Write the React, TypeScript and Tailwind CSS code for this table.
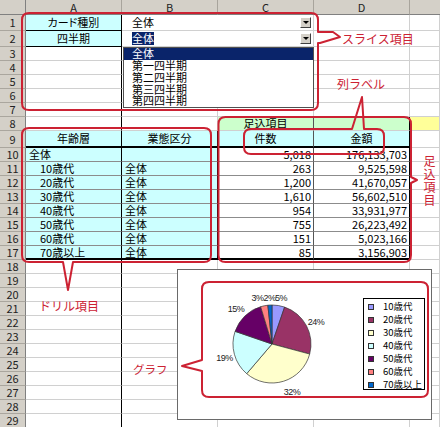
import type { ReactNode } from "react";

type CellProps = {
  w: string;
  r?: string;
  b?: string;
  className?: string;
  children?: ReactNode;
};

// one spreadsheet cell, grid line on right and bottom unless overridden
function Cell({
  w,
  r = "border-r border-r-[#d0d0d0]",
  b = "border-b border-b-[#d0d0d0]",
  className = "",
  children,
}: CellProps) {
  return (
    <div className={`${w} ${r} ${b} ${className} h-full shrink-0 flex items-center whitespace-nowrap`}>
      {children}
    </div>
  );
}

function RowHead({ n }: { n: number }) {
  return (
    <div className="w-[26px] h-full shrink-0 flex items-center justify-center bg-[#d4d0c8] border-r border-r-[#808080] border-b border-b-[#aaa69e] text-[11px] text-[#222]">
      {n}
    </div>
  );
}

const COL_A = "border-r border-r-black";

function PlainRow({ n }: { n: number }) {
  return (
    <div className="flex h-[14px]">
      <RowHead n={n} />
      <Cell w="w-[96px]" r={COL_A} />
      <Cell w="w-[96px]" />
      <Cell w="w-[96px]" />
      <Cell w="w-[96px]" />
      <Cell w="w-[30px]" />
    </div>
  );
}

function ArrowButton() {
  return (
    <div className="w-[11px] h-[11px] flex items-center justify-center bg-[#d4d0c8] border border-t-white border-l-white border-b-[#404040] border-r-[#404040]">
      <div className="w-0 h-0 border-l-[3px] border-r-[3px] border-t-[3px] border-l-transparent border-r-transparent border-t-black" />
    </div>
  );
}

const tableRows = [
  { n: 10, a: "全体", b: "", c: "5,018", d: "176,133,703" },
  { n: 11, a: "10歳代", b: "全体", c: "263", d: "9,525,598" },
  { n: 12, a: "20歳代", b: "全体", c: "1,200", d: "41,670,057" },
  { n: 13, a: "30歳代", b: "全体", c: "1,610", d: "56,602,510" },
  { n: 14, a: "40歳代", b: "全体", c: "954", d: "33,931,977" },
  { n: 15, a: "50歳代", b: "全体", c: "755", d: "26,223,492" },
  { n: 16, a: "60歳代", b: "全体", c: "151", d: "5,023,166" },
  { n: 17, a: "70歳以上", b: "全体", c: "85", d: "3,156,903" },
];

const slices = [
  { label: "10歳代", v: 263, color: "#9999ff" },
  { label: "20歳代", v: 1200, color: "#993366" },
  { label: "30歳代", v: 1610, color: "#ffffcc" },
  { label: "40歳代", v: 954, color: "#ccffff" },
  { label: "50歳代", v: 755, color: "#660066" },
  { label: "60歳代", v: 151, color: "#ff8080" },
  { label: "70歳以上", v: 85, color: "#0066cc" },
];

function pieSlices(cx: number, cy: number, r: number) {
  const total = slices.reduce((s, x) => s + x.v, 0);
  let acc = 0;
  return slices.map((s) => {
    const a0 = (acc / total) * Math.PI * 2;
    acc += s.v;
    const a1 = (acc / total) * Math.PI * 2;
    const x0 = cx + r * Math.sin(a0);
    const y0 = cy - r * Math.cos(a0);
    const x1 = cx + r * Math.sin(a1);
    const y1 = cy - r * Math.cos(a1);
    const large = a1 - a0 > Math.PI ? 1 : 0;
    return {
      ...s,
      d: `M${cx},${cy} L${x0},${y0} A${r},${r} 0 ${large} 1 ${x1},${y1} Z`,
    };
  });
}

const pctLabels = [
  { t: "5%", x: 103, y: 31 },
  { t: "3%2%", x: 85.5, y: 31 },
  { t: "24%", x: 138, y: 55 },
  { t: "15%", x: 58, y: 42 },
  { t: "19%", x: 46.5, y: 91 },
  { t: "32%", x: 114, y: 125 },
];

export default function App() {
  return (
    <div className="relative w-[440px] h-[427px] overflow-hidden bg-white text-black leading-none font-['Noto_Sans_CJK_JP','Noto_Sans',sans-serif]">
      {/* Sheet */}
      <div className="flex flex-col text-[11px] [font-feature-settings:'palt']">
        {/* Column headers */}
        <div className="flex h-[15px]">
          <div className="w-[26px] h-full shrink-0 bg-[#d4d0c8] border-r border-r-[#808080] border-b border-b-[#808080]" />
          {["A", "B", "C", "D"].map((c) => (
            <div
              key={c}
              className="w-[96px] h-full shrink-0 flex items-center justify-center bg-[#d4d0c8] border-r border-r-[#a8a49c] border-b border-b-[#808080] text-[11px] text-[#222]"
            >
              {c}
            </div>
          ))}
          <div className="w-[30px] h-full shrink-0 bg-[#d4d0c8] border-b border-b-[#808080]" />
        </div>

        {/* Row 1 */}
        <div className="flex h-[16px]">
          <RowHead n={1} />
          <Cell w="w-[96px]" r={COL_A} b="border-b border-b-black" className="justify-center bg-[#ccffff]">
            カード種別
          </Cell>
          <Cell w="w-[192px]" className="justify-between pl-[10px] pr-[2px] bg-white">
            <span>全体</span>
            <ArrowButton />
          </Cell>
          <Cell w="w-[96px]" />
          <Cell w="w-[30px]" />
        </div>

        {/* Row 2 */}
        <div className="flex h-[16px]">
          <RowHead n={2} />
          <Cell w="w-[96px]" r={COL_A} b="border-b border-b-black" className="justify-center bg-[#ccffff]">
            四半期
          </Cell>
          <Cell w="w-[192px]" className="justify-between pl-[10px] pr-[2px] bg-white">
            <span className="bg-[#0a246a] text-white py-[1px]">全体</span>
            <ArrowButton />
          </Cell>
          <Cell w="w-[96px]" />
          <Cell w="w-[30px]" />
        </div>

        {[3, 4, 5, 6, 7].map((n) => (
          <PlainRow key={n} n={n} />
        ))}

        {/* Row 8 */}
        <div className="flex h-[14px]">
          <RowHead n={8} />
          <Cell w="w-[96px]" r={COL_A} />
          <Cell w="w-[96px]" />
          <Cell w="w-[96px]" r="border-r border-r-[#555]" className="justify-center bg-[#ccffcc]">
            足込項目
          </Cell>
          <Cell w="w-[96px]" r="border-r border-r-black" className="bg-[#ccffcc]" />
          <Cell w="w-[30px]" className="bg-[#ffff99]" />
        </div>

        {/* Row 9 : headings */}
        <div className="flex h-[17px]">
          <RowHead n={9} />
          <Cell w="w-[96px]" r={COL_A} b="border-b-2 border-b-black" className="justify-center bg-[#ccffff]">
            年齢層
          </Cell>
          <Cell w="w-[96px]" r="border-r border-r-black" b="border-b-2 border-b-black" className="justify-center bg-[#ccffff]">
            業態区分
          </Cell>
          <Cell w="w-[96px]" r="border-r border-r-[#555]" b="border-b-2 border-b-black" className="justify-center bg-[#ccffff]">
            件数
          </Cell>
          <Cell w="w-[96px]" r="border-r border-r-black" b="border-b-2 border-b-black" className="justify-center bg-[#ccffff]">
            金額
          </Cell>
          <Cell w="w-[30px]" />
        </div>

        {/* Rows 10-17 : data */}
        {tableRows.map((row) => {
          const b = row.n === 17 ? "border-b-2 border-b-black" : "border-b border-b-[#8c8c8c]";
          return (
            <div key={row.n} className="flex h-[14px]">
              <RowHead n={row.n} />
              <Cell
                w="w-[96px]"
                r={COL_A}
                b={b}
                className={row.n === 10 ? "pl-[3px] bg-[#ccffff]" : "pl-[14px] bg-[#ccffff]"}
              >
                {row.a}
              </Cell>
              <Cell w="w-[96px]" r="border-r border-r-black" b={b} className="pl-[3px] bg-[#ccffff]">
                {row.b}
              </Cell>
              <Cell w="w-[96px]" r="border-r border-r-[#555]" b={b} className="justify-end pr-[2px]">
                {row.c}
              </Cell>
              <Cell w="w-[96px]" r="border-r border-r-black" b={b} className="justify-end pr-[2px]">
                {row.d}
              </Cell>
              <Cell w="w-[30px]" />
            </div>
          );
        })}

        {[18, 19, 20, 21, 22, 23, 24, 25, 26, 27, 28, 29].map((n) => (
          <PlainRow key={n} n={n} />
        ))}
      </div>

      {/* Open dropdown list of the quarter selector */}
      <div className="absolute left-[123px] top-[47px] w-[191px] h-[61px] bg-white border border-[#505050] text-[11px] leading-[11.5px] [font-feature-settings:'palt']">
        <div className="h-[12px] pl-[8px] bg-[#0a246a] text-white">全体</div>
        {["第一四半期", "第二四半期", "第三四半期", "第四四半期"].map((q) => (
          <div key={q} className="h-[11.75px] pl-[8px]">
            {q}
          </div>
        ))}
      </div>

      {/* Embedded chart */}
      <div className="absolute left-[177px] top-[269px] w-[255px] h-[151px] bg-white border border-[#6a6a6a]">
        <svg width="253" height="149" className="absolute left-0 top-0">
          {pieSlices(94, 74, 39).map((s) => (
            <path key={s.label} d={s.d} fill={s.color} stroke="#333" strokeWidth="0.7" />
          ))}
          {pctLabels.map((l) => (
            <text
              key={l.t}
              x={l.x}
              y={l.y}
              textAnchor="middle"
              fontSize="9"
              letterSpacing="-0.5"
              fill="#222"
              fontFamily="Liberation Sans, sans-serif"
            >
              {l.t}
            </text>
          ))}
        </svg>
        <div className="absolute left-[185px] top-[28px] w-[62px] h-[92px] border border-black bg-white pt-[1px] text-[9.5px] [font-feature-settings:'palt']">
          {slices.map((s) => (
            <div key={s.label} className="h-[13px] flex items-center">
              <div className="ml-[4px] w-[6px] h-[6px] border border-[#333]" style={{ backgroundColor: s.color }} />
              <span className="ml-[9px] whitespace-nowrap">{s.label}</span>
            </div>
          ))}
        </div>
      </div>

      {/* Annotation callouts */}
      <svg width="440" height="427" className="absolute left-0 top-0 pointer-events-none" fill="none" stroke="#cc2233" strokeWidth="2" strokeLinejoin="round">
        <path d="M29,13 H311 Q318,13 318,20 V32 L333,32 L340,37 L320,43 L318,43 V103 Q318,110 311,110 H29 Q22,110 22,103 V20 Q22,13 29,13 Z" />
        <path d="M251,129 H352 L362,97 L364,129 H377 Q384,129 384,136 V147 Q384,154 377,154 H251 Q244,154 244,147 V136 Q244,129 251,129 Z" />
        <path d="M29,128 H204 Q211,128 211,135 V255 Q211,262 204,262 H73 L68,290 L63,262 H29 Q22,262 22,255 V135 Q22,128 29,128 Z" />
        <path d="M225.5,117 H404 Q411,117 411,124 V177 L417,180 L411,183 V255 Q411,262 404,262 H225.5 Q218.5,262 218.5,255 V124 Q218.5,117 225.5,117 Z" />
        <path d="M209,282 H421 Q428,282 428,289 V390 Q428,397 421,397 H209 Q202,397 202,390 V371 L182,366 L202,360 V289 Q202,282 209,282 Z" />
      </svg>

      <span className="absolute left-[342px] top-[33px] text-[12px] leading-[12px] text-[#cc2233] whitespace-nowrap">スライス項目</span>
      <span className="absolute left-[337px] top-[78px] text-[12px] leading-[12px] text-[#cc2233] whitespace-nowrap">列ラベル</span>
      <span className="absolute left-[39px] top-[300px] text-[12px] leading-[12px] text-[#cc2233] whitespace-nowrap">ドリル項目</span>
      <span className="absolute left-[133px] top-[363px] text-[11.5px] leading-[12px] text-[#cc2233] whitespace-nowrap">グラフ</span>
      <span className="absolute left-[423px] top-[155px] text-[12px] leading-[12px] tracking-[1px] text-[#cc2233] [writing-mode:vertical-rl]">足込項目</span>
    </div>
  );
}
